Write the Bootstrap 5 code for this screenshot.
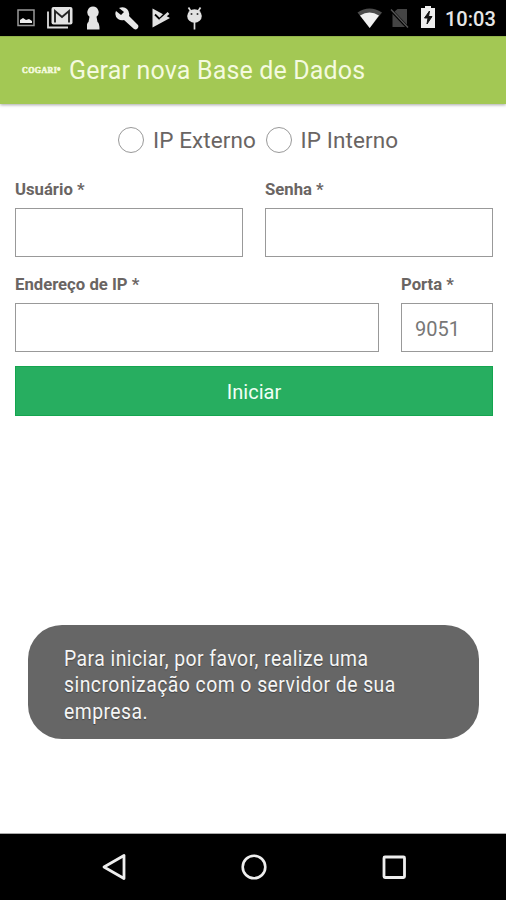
<!DOCTYPE html>
<html lang="pt-BR">
<head>
<meta charset="utf-8">
<meta name="viewport" content="width=device-width, initial-scale=1">
<title>Gerar nova Base de Dados</title>
<link href="https://cdn.jsdelivr.net/npm/bootstrap@5.3.0/dist/css/bootstrap.min.css" rel="stylesheet">
<style>
body{font-family:Roboto,"Noto Sans",sans-serif;color:#6a6563;height:900px;overflow:hidden}
.statusbar{height:36px;background:#000;color:#e6e6e6;padding-left:17px;padding-right:10px}
.statusbar svg,.sysnav svg{display:block;flex:none}
.clock{font-size:20px;font-weight:500;line-height:36px;width:51px;white-space:nowrap;padding-top:1px}
.appbar{height:68px;background:#a3c854;border-top:1px solid #92b34c;color:#f4fadf;padding:0 22px;box-shadow:0 1px 3px rgba(0,0,0,.35)}
.brandmark{width:47px;font:bold 8px/10px "Liberation Serif",serif;-webkit-text-stroke:.6px #f4fadf;letter-spacing:.4px}
.brandmark sup{font-size:4px}
.apptitle{font-size:25px;line-height:34px;font-weight:400;white-space:nowrap;letter-spacing:.16px;padding-top:1px}
.modes{height:76px;font-size:22.500px;padding:0 0 4px 118px;line-height:30px;letter-spacing:.1px}
.modes label{white-space:nowrap}
.modes .form-check-input{width:26px;height:26px;border:1px solid #999;margin:0 9px 0 0}
.modes label+label{margin-left:9.500px}
.fields{padding:0 13px 0 15px}
.fields .form-label{font-size:16.700px;line-height:20px;font-weight:700;margin:0 0 8px;display:block;white-space:nowrap}
.fields .form-control{height:49px;border:1px solid #999;border-radius:0;font-size:20px;padding:2px 13px 0;color:#777}
.fieldrow{gap:22px;margin-bottom:18px;height:77px}
.fieldrow .porta{width:92px;flex:none}
.start{height:50px;border-radius:0;background:#27ae60;border:1px solid #14a54f;color:#f1fff5;font-size:20px;margin-top:-4px;padding:2px 0 0}
.notice{margin:0 27px 94px 28px;height:114px;border-radius:34px;background:#666;color:#f5f5f5;padding:20px 36px;font-size:22.500px;line-height:26.300px;text-shadow:0 1px 1px #444}
.notice p{transform:scaleX(.86);transform-origin:left;white-space:nowrap;letter-spacing:.55px}
.sysnav{height:67px;background:#000;border-top:1px solid #aaa;padding-left:98.500px;padding-right:97.500px}
</style>
</head>
<body class="bg-white d-flex flex-column m-0">
<header class="statusbar d-flex flex-shrink-0">
<svg width="30" height="36" viewBox="17 0 30 36"><path d="M18 10h16v15.500H18z" fill="none" stroke="#999" stroke-width="1.500"/><path d="M20 23v-3l3-2 3 2 3-1 3 2v2z" fill="#eee"/></svg>
<svg width="40" height="36" viewBox="47 0 40 36"><path d="M48 11.500V27.500H68" fill="none" stroke="#ddd" stroke-width="1.800"/><rect x="51.500" y="7" width="21" height="17.500" rx="2" fill="#e2e2e2"/><path d="M55 22.500V11l7 6 7-6v11.500" fill="none" stroke="#222" stroke-width="1.900"/></svg>
<svg width="28" height="36" viewBox="87 0 28 36"><path d="M93 6.500a5.800 5.800 0 0 1 3.500 10.300L97.500 22q2 1 2 7.500h-13q0-6.500 2-7.500l1-5.200A5.800 5.800 0 0 1 93 6.500z" fill="#e5e5e5"/></svg>
<svg width="37" height="36" viewBox="115 0 37 36"><path d="M119 8l5 4-3 3-5-4q-2 5 2 8 3 2 6 1l10 9q2 1 3.500-.5T138 25l-9-9q1-4-2-7t-8-1z" fill="#e8e8e8"/></svg>
<svg width="34" height="36" viewBox="152 0 34 36"><path d="M152.500 8.500L170 18l-17.500 9.500z" fill="#e2e2e2"/><path d="M155 14.500l4.500 4.500L167 11.500" fill="none" stroke="#000" stroke-width="1.800"/><path d="M160 20.500l8.500-7.500" fill="none" stroke="#ddd" stroke-width="2.600"/></svg>
<svg width="20" height="36" viewBox="186 0 20 36"><path d="M188.500 7.500l2.500 4M200.500 7.500l-2.500 4M194.500 22v7.500" stroke="#ddd" stroke-width="1.700"/><ellipse cx="194.500" cy="16" rx="7.300" ry="6.800" fill="#e2e2e2"/><circle cx="191.500" cy="14" r="1" fill="#333"/><circle cx="197.500" cy="14" r="1" fill="#333"/></svg>
<svg class="ms-auto" width="33" height="36" viewBox="357 0 33 36"><path d="M357.500 12.500q12-8 24.500 0L369.700 28z" fill="#4c4c4c"/><path d="M360 15.500q9.500-6 19 0L369.700 28z" fill="#f1f1f1"/></svg>
<svg width="31" height="36" viewBox="390 0 31 36"><path d="M397.500 9H407v18h-14.500V13.500z" fill="#444"/><path d="M391 10l17 18" stroke="#000" stroke-width="3"/><path d="M391 9.500l17 18" stroke="#555" stroke-width="1.400"/></svg>
<svg width="24" height="36" viewBox="421 0 24 36"><path d="M425 6h6v2h4v20h-14V8h4z" fill="#eee"/><path d="M429.500 11l-5 7h3.500l-1 6 5-7.500h-3.500z" fill="#111" stroke="#111"/></svg>
<span class="clock">10:03</span>
</header>
<div class="appbar d-flex align-items-center flex-shrink-0">
<span class="brandmark">COGARI<sup>®</sup></span>
<h1 class="apptitle m-0">Gerar nova Base de Dados</h1>
</div>
<main class="flex-grow-1 d-flex flex-column">
<div class="modes d-flex align-items-center">
<label class="d-flex align-items-center"><input class="form-check-input" type="radio" name="modo"><span>IP Externo</span></label>
<label class="d-flex align-items-center"><input class="form-check-input" type="radio" name="modo"><span>IP Interno</span></label>
</div>
<form class="fields">
<div class="fieldrow d-flex">
<div class="flex-fill"><label class="form-label" for="usuario">Usuário *</label><input id="usuario" class="form-control"></div>
<div class="flex-fill"><label class="form-label" for="senha">Senha *</label><input id="senha" type="password" class="form-control"></div>
</div>
<div class="fieldrow d-flex">
<div class="flex-fill"><label class="form-label" for="ip">Endereço de IP *</label><input id="ip" class="form-control"></div>
<div class="porta"><label class="form-label" for="porta">Porta *</label><input id="porta" class="form-control" value="9051"></div>
</div>
<button type="button" class="btn start w-100">Iniciar</button>
</form>
<div class="notice mt-auto" role="status"><p class="m-0">Para iniciar, por favor, realize uma<br>sincronização com o servidor de sua<br>empresa.</p></div>
</main>
<nav class="sysnav d-flex justify-content-between align-items-center flex-shrink-0">
<svg width="30" height="30" viewBox="0 0 30 30"><path d="M5 15L25 3.500v23z" fill="none" stroke="#eee" stroke-width="2.800" stroke-linejoin="round"/></svg>
<svg width="30" height="30" viewBox="0 0 30 30"><circle cx="15" cy="15" r="11.300" fill="none" stroke="#eee" stroke-width="2.600"/></svg>
<svg width="30" height="30" viewBox="0 0 30 30"><rect x="5" y="5" width="20.500" height="20.500" rx="1" fill="none" stroke="#eee" stroke-width="2.800"/></svg>
</nav>
<script src="https://cdn.jsdelivr.net/npm/bootstrap@5.3.0/dist/js/bootstrap.bundle.min.js"></script>
</body>
</html>
